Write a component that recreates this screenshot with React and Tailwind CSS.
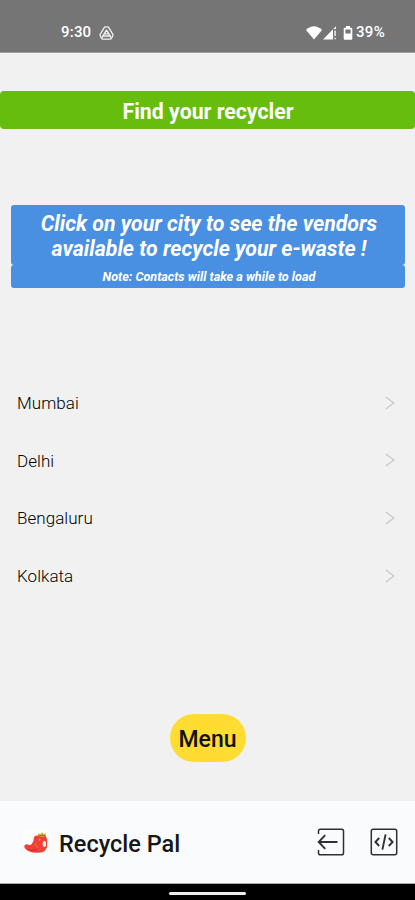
// App.jsx
import React from 'react';

const cities = ['Mumbai', 'Delhi', 'Bengaluru', 'Kolkata'];

function StatusBar() {
  return (
    <div className="h-[53px] shrink-0 bg-[#757575] border-b border-[#a3a3a3] flex justify-between items-start pt-[23px] pl-[61px] pr-[29px] text-white text-[15px] leading-[19px] font-medium">
      <div className="flex items-center">
        <span className="w-[31px] whitespace-nowrap tracking-[0.2px]">9:30</span>
        <svg className="ml-[7px]" width="15" height="14" viewBox="0 0 15 14" fill="none" stroke="#f1f1f1">
          <path d="M5.2 1.6Q5.6.8 6.5.8h2q.9 0 1.3.8l4 6.7q.4.8 0 1.5l-1.4 2.6q-.4.7-1.3.7H3.9q-.9 0-1.3-.7L1.2 9.8q-.4-.7 0-1.5z" strokeWidth="1.3" />
          <path d="M7.5 4.2 4 9.9h7z" strokeWidth="1.5" strokeLinejoin="round" />
          <path d="M6 7.9h3M3 12l1-2.2M12 12l-1-2.2" strokeWidth="1.2" />
        </svg>
      </div>
      <div className="flex items-center">
        <svg width="16" height="14" viewBox="0 0 16 14" fill="#fff">
          <path d="M0 3.9Q8-3.6 16 3.9L8 13.5z" />
        </svg>
        <svg className="ml-px" width="14" height="14" viewBox="0 0 14 14" fill="#fff">
          <path d="M0 13.5 12.9.2V3H10v10.5z" />
          <path d="M11.4 4.5h1.3V10h-1.3zM11.4 11.7h1.3v1.6h-1.3z" />
        </svg>
        <svg className="ml-[6px]" width="10" height="14" viewBox="0 0 10 14">
          <path d="M3 0h4v1.7h1.3q1 0 1 1v10q0 1-1 1H1.7q-1 0-1-1v-10q0-1 1-1H3z" fill="#fff" />
          <path d="M2.4 3.5h5.2v4H2.4z" fill="#757575" />
        </svg>
        <span className="ml-[3px] w-[30px] whitespace-nowrap tracking-[0.3px]">39%</span>
      </div>
    </div>
  );
}

function CityRow({ name }) {
  return (
    <li className="h-[57.6px] flex items-center justify-between pl-[17px] pr-[20px]">
      <span className="pt-[2px] text-[17px] font-light tracking-[0.05px] text-black">{name}</span>
      <svg width="10" height="14" viewBox="0 0 10 14" fill="none" stroke="#c9c9c9" strokeWidth="1.4">
        <path d="m.8 1 8 6-8 6" />
      </svg>
    </li>
  );
}

function Mascot() {
  return (
    <div className="mt-[2px] w-[26px] h-[26px] bg-[#fdfdfc] flex items-center justify-center">
      <svg width="24" height="22" viewBox="0 0 24 22">
        <path d="M9.8 6Q10.5 2.8 13.2 3.6q5-1.6 8.6 0 1.8 4 1.5 8.4 0 5.2-3.2 7.4-3.3 1.6-8 1.3Q4.5 20.4 1 16.4q-1.5-2.2.2-3.6 1.8-1.2 3.6-.1 1.5.7 2.9-.7Q10 9.6 9.8 6" fill="#ee4239" />
        <path d="M4 17q4 2.6 9 .6" fill="none" stroke="#d52f31" strokeWidth="1.4" />
        <path d="m14.5 4.2-.5-3 2.2 1L18 .3l1.6 1.9 2.2-1-.2 3.3q-3.3 1-7.1-.3" fill="#d9a42a" />
        <path d="M16 3v1.2M18.2 3v1.2M20.2 3v1.2" stroke="#5b3b20" strokeWidth=".9" />
        <ellipse cx="20.4" cy="12" rx="1.7" ry="3" fill="#fff2ed" />
        <circle cx="15.6" cy="7.6" r=".9" fill="#ff9185" />
        <path d="M11 11q0 3.4 3 4.5" fill="none" stroke="#f8655c" strokeWidth="1" />
      </svg>
    </div>
  );
}

function Footer() {
  return (
    <footer className="h-[83px] shrink-0 bg-[#fafbfd] border-b border-[#aaa] flex items-center pl-[23px] pr-[17px]">
      <Mascot />
      <span className="ml-[10px] pt-[5px] text-[23.5px] font-medium text-[#171717] whitespace-nowrap">Recycle Pal</span>
      <div className="ml-auto flex gap-[25px]">
        <svg width="28" height="28" viewBox="0 0 28 28" fill="none" stroke="#303030" strokeWidth="1.5">
          <path d="M1.5 6V3q0-1.8 1.8-1.8h21.4q1.8 0 1.8 1.8v22q0 1.8-1.8 1.8H3.3q-1.8 0-1.8-1.8v-3" />
          <path d="M8.2 7.2 1.7 14l6.5 6.8M2 14h18.5" strokeWidth="1.9" />
        </svg>
        <svg width="28" height="28" viewBox="0 0 28 28" fill="none" stroke="#303030" strokeWidth="1.5">
          <rect x="1.3" y="1.2" width="25.4" height="25.6" rx="2" />
          <path d="m9.2 10-3.8 4 3.8 4M18.8 10l3.8 4-3.8 4M15.6 6.4l-3.2 15.2" strokeWidth="1.9" />
        </svg>
      </div>
    </footer>
  );
}

export default function App() {
  return (
    <div className="w-full h-screen overflow-hidden bg-[#f1f1f1] flex flex-col font-['Roboto',sans-serif]">
      <StatusBar />
      <main className="flex-1 flex flex-col items-stretch pt-[38px]">
        <h1 className="h-[38px] bg-[#66bd0e] rounded-[4px] flex items-center justify-center pt-[3px] pl-px text-white text-[21.3px] font-bold">
          Find your recycler
        </h1>

        <div className="mt-[76px] ml-[11px] mr-[10px] text-white text-center italic font-bold">
          <p className="h-[60px] bg-[#4a90e2] rounded-[3px] pt-[7px] pl-[2px] text-[21.3px] leading-[24.5px]">
            Click on your city to see the vendors
            <br />
            available to recycle your e-waste !
          </p>
          <p className="h-[23px] bg-[#4a90e2] rounded-[3px] pl-[2px] text-[12.6px] leading-[24px]">
            Note: Contacts will take a while to load
          </p>
        </div>

        <ul className="mt-[86px]">
          {cities.map((city) => (
            <CityRow key={city} name={city} />
          ))}
        </ul>

        <button className="mt-[110px] self-center w-[76px] h-[48px] rounded-[24px] bg-[#ffdc32] text-[23px] font-medium text-[#111] pt-[3px]">
          Menu
        </button>
      </main>
      <Footer />
      <div className="h-4 shrink-0 bg-black flex justify-center items-center pt-[2px]">
        <div className="w-[77px] h-[3px] rounded-full bg-[#eee]" />
      </div>
    </div>
  );
}
